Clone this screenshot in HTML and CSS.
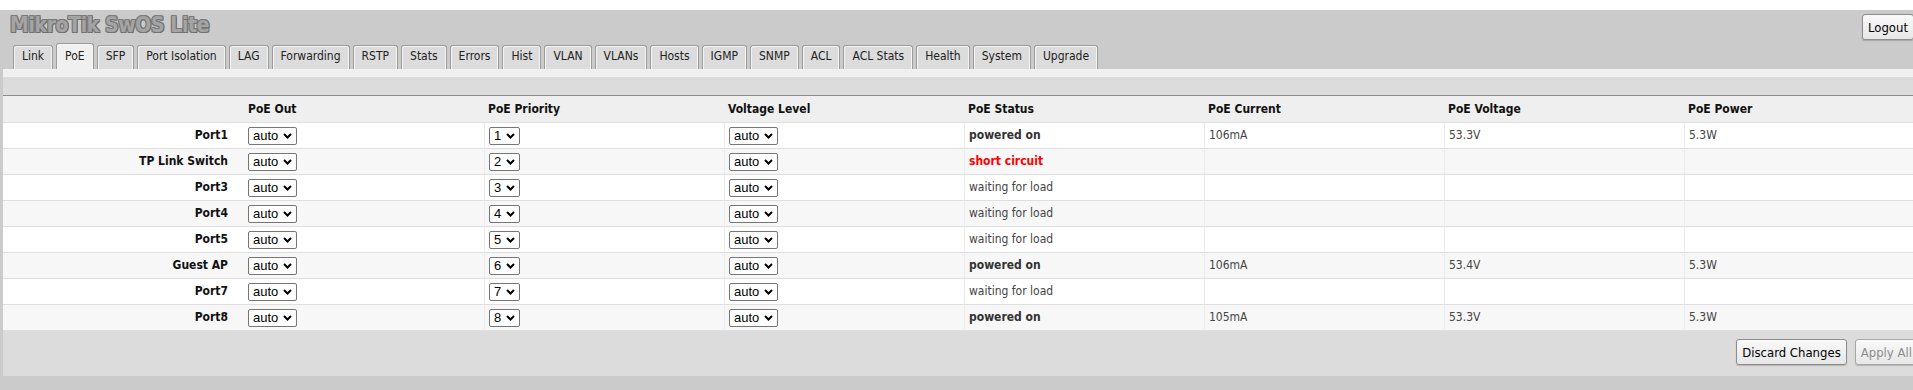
FILE: index.html
```html
<!DOCTYPE html>
<html lang="en">
<head>
<meta charset="utf-8">
<title>MikroTik SwOS Lite</title>
<link rel="stylesheet" href="styles.css">
</head>
<body>
<div class="app">
  <header class="top">
    <div class="top-row">
      <h1 class="brand">MikroTik SwOS Lite</h1>
      <button class="btn logout" type="button">Logout</button>
    </div>
    <nav class="tabs">
      <a class="tab">Link</a>
      <a class="tab active">PoE</a>
      <a class="tab">SFP</a>
      <a class="tab">Port Isolation</a>
      <a class="tab">LAG</a>
      <a class="tab">Forwarding</a>
      <a class="tab">RSTP</a>
      <a class="tab">Stats</a>
      <a class="tab">Errors</a>
      <a class="tab">Hist</a>
      <a class="tab">VLAN</a>
      <a class="tab">VLANs</a>
      <a class="tab">Hosts</a>
      <a class="tab">IGMP</a>
      <a class="tab">SNMP</a>
      <a class="tab">ACL</a>
      <a class="tab">ACL Stats</a>
      <a class="tab">Health</a>
      <a class="tab">System</a>
      <a class="tab">Upgrade</a>
    </nav>
  </header>
  <main class="panel">
    <div class="strip"></div>
    <div class="band"></div>
    <table class="poe">
      <colgroup>
        <col class="c-name"><col class="c-data"><col class="c-data"><col class="c-data"><col class="c-data"><col class="c-data"><col class="c-data"><col class="c-data">
      </colgroup>
      <thead>
        <tr><th></th><th>PoE Out</th><th>PoE Priority</th><th>Voltage Level</th><th>PoE Status</th><th>PoE Current</th><th>PoE Voltage</th><th>PoE Power</th></tr>
      </thead>
      <tbody>
        <tr>
          <td class="name">Port1</td>
          <td><span class="sel"><select><option selected>auto</option><option>on</option><option>off</option></select><svg class="chev" viewBox="0 0 9 6"><path d="M1 1l3.5 3.5L8 1"/></svg></span></td>
          <td class="sep"><span class="sel"><select><option selected>1</option><option>2</option><option>3</option><option>4</option></select><svg class="chev" viewBox="0 0 9 6"><path d="M1 1l3.5 3.5L8 1"/></svg></span></td>
          <td class="sep"><span class="sel"><select><option selected>auto</option><option>low</option><option>high</option></select><svg class="chev" viewBox="0 0 9 6"><path d="M1 1l3.5 3.5L8 1"/></svg></span></td>
          <td class="sep on">powered on</td>
          <td class="sep">106mA</td>
          <td class="sep">53.3V</td>
          <td class="sep">5.3W</td>
        </tr>
        <tr>
          <td class="name">TP Link Switch</td>
          <td><span class="sel"><select><option selected>auto</option><option>on</option><option>off</option></select><svg class="chev" viewBox="0 0 9 6"><path d="M1 1l3.5 3.5L8 1"/></svg></span></td>
          <td class="sep"><span class="sel"><select><option>1</option><option selected>2</option><option>3</option><option>4</option></select><svg class="chev" viewBox="0 0 9 6"><path d="M1 1l3.5 3.5L8 1"/></svg></span></td>
          <td class="sep"><span class="sel"><select><option selected>auto</option><option>low</option><option>high</option></select><svg class="chev" viewBox="0 0 9 6"><path d="M1 1l3.5 3.5L8 1"/></svg></span></td>
          <td class="sep err">short circuit</td>
          <td class="sep"></td>
          <td class="sep"></td>
          <td class="sep"></td>
        </tr>
        <tr>
          <td class="name">Port3</td>
          <td><span class="sel"><select><option selected>auto</option><option>on</option><option>off</option></select><svg class="chev" viewBox="0 0 9 6"><path d="M1 1l3.5 3.5L8 1"/></svg></span></td>
          <td class="sep"><span class="sel"><select><option>1</option><option>2</option><option selected>3</option><option>4</option></select><svg class="chev" viewBox="0 0 9 6"><path d="M1 1l3.5 3.5L8 1"/></svg></span></td>
          <td class="sep"><span class="sel"><select><option selected>auto</option><option>low</option><option>high</option></select><svg class="chev" viewBox="0 0 9 6"><path d="M1 1l3.5 3.5L8 1"/></svg></span></td>
          <td class="sep">waiting for load</td>
          <td class="sep"></td>
          <td class="sep"></td>
          <td class="sep"></td>
        </tr>
        <tr>
          <td class="name">Port4</td>
          <td><span class="sel"><select><option selected>auto</option><option>on</option><option>off</option></select><svg class="chev" viewBox="0 0 9 6"><path d="M1 1l3.5 3.5L8 1"/></svg></span></td>
          <td class="sep"><span class="sel"><select><option>1</option><option>2</option><option>3</option><option selected>4</option></select><svg class="chev" viewBox="0 0 9 6"><path d="M1 1l3.5 3.5L8 1"/></svg></span></td>
          <td class="sep"><span class="sel"><select><option selected>auto</option><option>low</option><option>high</option></select><svg class="chev" viewBox="0 0 9 6"><path d="M1 1l3.5 3.5L8 1"/></svg></span></td>
          <td class="sep">waiting for load</td>
          <td class="sep"></td>
          <td class="sep"></td>
          <td class="sep"></td>
        </tr>
        <tr>
          <td class="name">Port5</td>
          <td><span class="sel"><select><option selected>auto</option><option>on</option><option>off</option></select><svg class="chev" viewBox="0 0 9 6"><path d="M1 1l3.5 3.5L8 1"/></svg></span></td>
          <td class="sep"><span class="sel"><select><option>4</option><option selected>5</option><option>6</option></select><svg class="chev" viewBox="0 0 9 6"><path d="M1 1l3.5 3.5L8 1"/></svg></span></td>
          <td class="sep"><span class="sel"><select><option selected>auto</option><option>low</option><option>high</option></select><svg class="chev" viewBox="0 0 9 6"><path d="M1 1l3.5 3.5L8 1"/></svg></span></td>
          <td class="sep">waiting for load</td>
          <td class="sep"></td>
          <td class="sep"></td>
          <td class="sep"></td>
        </tr>
        <tr>
          <td class="name">Guest AP</td>
          <td><span class="sel"><select><option selected>auto</option><option>on</option><option>off</option></select><svg class="chev" viewBox="0 0 9 6"><path d="M1 1l3.5 3.5L8 1"/></svg></span></td>
          <td class="sep"><span class="sel"><select><option>5</option><option selected>6</option><option>7</option></select><svg class="chev" viewBox="0 0 9 6"><path d="M1 1l3.5 3.5L8 1"/></svg></span></td>
          <td class="sep"><span class="sel"><select><option selected>auto</option><option>low</option><option>high</option></select><svg class="chev" viewBox="0 0 9 6"><path d="M1 1l3.5 3.5L8 1"/></svg></span></td>
          <td class="sep on">powered on</td>
          <td class="sep">106mA</td>
          <td class="sep">53.4V</td>
          <td class="sep">5.3W</td>
        </tr>
        <tr>
          <td class="name">Port7</td>
          <td><span class="sel"><select><option selected>auto</option><option>on</option><option>off</option></select><svg class="chev" viewBox="0 0 9 6"><path d="M1 1l3.5 3.5L8 1"/></svg></span></td>
          <td class="sep"><span class="sel"><select><option>6</option><option selected>7</option><option>8</option></select><svg class="chev" viewBox="0 0 9 6"><path d="M1 1l3.5 3.5L8 1"/></svg></span></td>
          <td class="sep"><span class="sel"><select><option selected>auto</option><option>low</option><option>high</option></select><svg class="chev" viewBox="0 0 9 6"><path d="M1 1l3.5 3.5L8 1"/></svg></span></td>
          <td class="sep">waiting for load</td>
          <td class="sep"></td>
          <td class="sep"></td>
          <td class="sep"></td>
        </tr>
        <tr>
          <td class="name">Port8</td>
          <td><span class="sel"><select><option selected>auto</option><option>on</option><option>off</option></select><svg class="chev" viewBox="0 0 9 6"><path d="M1 1l3.5 3.5L8 1"/></svg></span></td>
          <td class="sep"><span class="sel"><select><option>7</option><option selected>8</option></select><svg class="chev" viewBox="0 0 9 6"><path d="M1 1l3.5 3.5L8 1"/></svg></span></td>
          <td class="sep"><span class="sel"><select><option selected>auto</option><option>low</option><option>high</option></select><svg class="chev" viewBox="0 0 9 6"><path d="M1 1l3.5 3.5L8 1"/></svg></span></td>
          <td class="sep on">powered on</td>
          <td class="sep">105mA</td>
          <td class="sep">53.3V</td>
          <td class="sep">5.3W</td>
        </tr>
      </tbody>
    </table>
    <div class="actions">
      <button class="btn" type="button">Discard Changes</button>
      <button class="btn" type="button" disabled>Apply All</button>
    </div>
  </main>
</div>
</body>
</html>
```

FILE: styles.css
```css
html, body {
  margin: 0;
  overflow: hidden;
  background: #ffffff;
}

body {
  padding-top: 10px;
  font-family: "DejaVu Sans Condensed", "DejaVu Sans", sans-serif;
  font-stretch: condensed;
  font-size: 12px;
}

.app {
  width: 1927px;
  background: #cbcbcb;
  padding-bottom: 30px;
}

.top {
  height: 59px;
  display: flex;
  flex-direction: column;
  justify-content: space-between;
  padding: 0 13px 0 10px;
}

.top-row {
  display: flex;
  justify-content: space-between;
  align-items: flex-start;
}

.brand {
  margin: 0;
  padding-top: 3px;
  font-family: "DejaVu Sans Condensed", "DejaVu Sans", sans-serif;
  font-weight: bold;
  font-size: 21px;
  line-height: 25px;
  letter-spacing: -0.4px;
  color: #a4a4a4;
  text-shadow: 1px 0 0 #727272, -1px 0 0 #7a7a7a, 0 1px 0 #727272, 0 -1px 0 #7a7a7a,
    1px 1px 0 #666666, -1px -1px 0 #808080, 1px -1px 0 #767676, -1px 1px 0 #767676;
}

.tabs {
  display: flex;
  align-items: flex-end;
  gap: 3px;
  margin-left: 3px;
}

.tab {
  display: block;
  padding: 0 8px 3px;
  line-height: 20px;
  border: 1px solid #9b9b9b;
  border-bottom: 0;
  border-radius: 3px 3px 0 0;
  background: #dcdcdc;
  box-shadow: inset 1px 1px 0 #f6f6f6, inset -1px 0 0 #f6f6f6;
  font-size: 12px;
  color: #222222;
  white-space: nowrap;
}

.tab.active {
  background: #f0f0f0;
  padding-top: 2px;
}

.panel {
  display: block;
  margin-left: 3px;
  width: 1921px;
  background: #dcdcdc;
}

.strip {
  height: 8px;
  background: #f0f0f0;
}

.band {
  height: 18px;
}

.poe {
  width: 1921px;
  table-layout: fixed;
  border-collapse: separate;
  border-spacing: 0;
  border-top: 1px solid #8c8c8c;
  font-size: 12px;
}

.c-name { width: 241px; }
.c-data { width: 240px; }

.poe th {
  height: 26px;
  line-height: 26px;
  padding: 0 4px;
  text-align: left;
  font-weight: bold;
  color: #111111;
  background: #efefef;
  border-bottom: 1px solid #dedede;
  white-space: nowrap;
}

.poe td {
  height: 25px;
  line-height: 25px;
  padding: 0 4px;
  vertical-align: middle;
  color: #444444;
  background: #ffffff;
  border-bottom: 1px solid #dedede;
  white-space: nowrap;
}

.poe tbody tr:nth-child(even) td {
  background: #f7f7f7;
}

.poe td.name {
  text-align: right;
  padding-right: 16px;
  font-weight: bold;
  color: #111111;
}

.poe td.sep {
  border-left: 1px solid #ebebeb;
}

.poe td.on {
  font-weight: bold;
  color: #333333;
}

.poe td.err {
  font-weight: bold;
  color: #ff0000;
}

.sel {
  position: relative;
  display: inline-block;
  vertical-align: middle;
  line-height: 0;
}

.sel select {
  -webkit-appearance: none;
  appearance: none;
  height: 18px;
  margin: 0;
  padding: 0 17px 0 4px;
  border: 1px solid #767676;
  border-radius: 2px;
  background: #ffffff;
  font-family: "Liberation Sans", Arial, sans-serif;
  font-size: 13px;
  color: #000000;
}

.chev {
  position: absolute;
  right: 5px;
  top: 6px;
  width: 9px;
  height: 6px;
  pointer-events: none;
  fill: none;
  stroke: #000000;
  stroke-width: 2;
}

.actions {
  height: 45px;
  box-sizing: border-box;
  padding: 8px 6px 0 0;
  display: flex;
  justify-content: flex-end;
  align-items: flex-start;
  gap: 8px;
}

.btn {
  height: 26px;
  margin: 0;
  padding: 0 5px;
  font-family: "DejaVu Sans Condensed", "DejaVu Sans", sans-serif;
  font-stretch: condensed;
  font-size: 13px;
  color: #000000;
  background: linear-gradient(#f9f9f9, #e7e7e7);
  border: 1px solid #8d8d8d;
  border-radius: 3px;
  box-shadow: 0 1px 1px rgba(0, 0, 0, 0.18);
}

.btn:disabled {
  color: #8c8c8c;
  border-color: #a8a8a8;
}

.logout {
  margin-top: 4px;
}
```
